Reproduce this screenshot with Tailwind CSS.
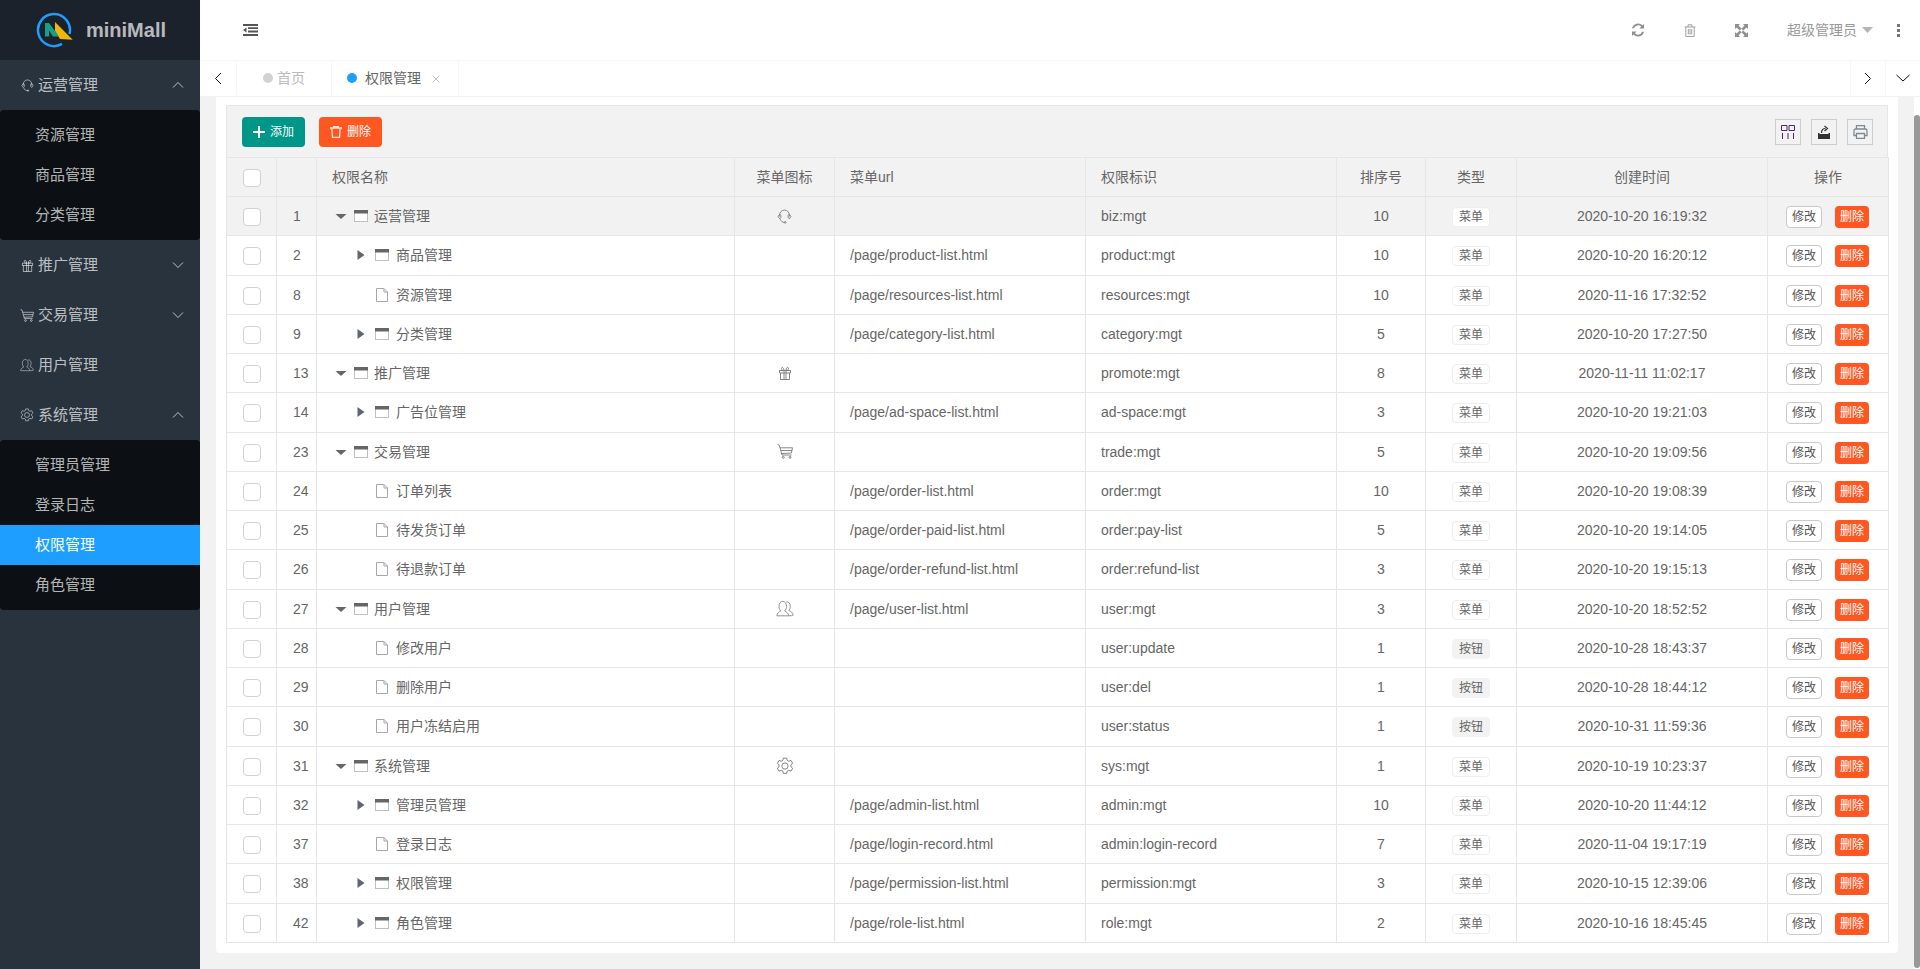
<!DOCTYPE html>
<html lang="zh-CN">
  <head>
    <meta charset="UTF-8" />
    <meta name="viewport" content="width=device-width, initial-scale=1.0" />
    <title>miniMall</title>
    <script src="https://cdn.jsdelivr.net/npm/@tailwindcss/browser@4"></script>
  </head>
  <body class="h-screen overflow-hidden flex bg-[#f2f2f2] text-[#666] text-sm [font-family:'Liberation_Sans','Noto_Sans_CJK_SC',sans-serif]">
    <!-- shared icons -->
    <svg class="hidden">
      <symbol id="i-headset" viewBox="0 0 14 14" fill="none" stroke="currentColor" stroke-width=".8"><path d="M2.500 7V5.500a4.500 4.500 0 0 1 9 0V7" /><path d="M2.500 4.800 1 7l1.500 2.200L3.600 8V6zM11.500 4.800 13 7l-1.500 2.200L10.400 8V6z" /><path d="M3 9.500c.6 2 2 3 4 3" /><circle cx="7.600" cy="12.500" r=".8" /></symbol>
      <symbol id="i-gift" viewBox="0 0 14 14" fill="none" stroke="currentColor" stroke-width=".9"><path d="M1.500 4.500h11V7h-11zM2.500 7v6.500h9V7M6 4.500v9M8 4.500v9" /><path d="M6 4.500C4 4.500 3 3 3.700 1.800S6 2.300 6 4.500M8 4.500c2 0 3-1.500 2.300-2.700S8 2.300 8 4.500" /></symbol>
      <symbol id="i-cart" viewBox="0 0 16 15" fill="none" stroke="currentColor" stroke-width=".9"><path d="M.5 .5 2.300 1.200 5 11h9.500" /><path d="M3.200 3.800H15.500L14.400 9 4.500 9.500M4 6.500h10.800" /><circle cx="6.300" cy="13.300" r="1" /><circle cx="13" cy="13.300" r="1" /></symbol>
      <symbol id="i-user" viewBox="0 0 16 14" fill="none" stroke="currentColor" stroke-width=".7"><path d="M.8 13.500c0-2.500 2-3.500 3.500-4.200C3.200 8.300 2.700 7 2.700 5c0-2.700 1.400-4.300 3.300-4.300S9.300 2.300 9.300 5c0 2-.5 3.300-1.600 4.300 1.500.7 3.500 1.700 3.500 4.200z" /><path d="M9.200 1.200c2-.4 3.500 1.200 3.500 3.800 0 1.800-.5 3-1.300 3.800 1.700.7 3.800 1.700 3.800 4.200-.1.300-2.500.5-4 .5" /></symbol>
      <symbol id="i-gear" viewBox="0 0 16 16" fill="none" stroke="currentColor" stroke-width=".8"><path d="M6.500 1h3l.4 2 1.500.8 1.900-.8 1.500 2.600-1.500 1.300v1.800l1.500 1.300-1.500 2.600-1.900-.8-1.500.8-.4 2h-3l-.4-2-1.500-.8-1.900.8L1.200 10l1.500-1.300V6.900L1.200 5.600l1.500-2.600 1.900.8 1.500-.8z" /><circle cx="8" cy="8" r="2.800" /></symbol>
      <symbol id="i-file" viewBox="0 0 12 14" fill="none" stroke="#a9a5ad" stroke-width="1"><path d="M.5 .5h7.500l3.500 3.500v9.500H.5z" /><path d="M8 .5V4h3.500" /></symbol>
      <symbol id="i-folder" viewBox="0 0 14 12"><rect x=".5" y=".5" width="13" height="11" fill="#fff" stroke="#c0c0c0" /><rect x="0" y="0" width="14" height="3.500" fill="#666" /></symbol>
      <symbol id="i-caret-down" viewBox="0 0 14 14" fill="#666"><path d="M1.500 5h11L7 10z" /></symbol>
      <symbol id="i-caret-right" viewBox="0 0 14 14" fill="#5f6670"><path d="M2.500 2l7 5-7 5z" /></symbol>
    </svg>

    <!-- sidebar -->
    <aside class="w-[200px] shrink-0 bg-[#28333e] text-[15px] text-white/70">
      <div class="h-[60px] bg-[#1c222b] flex items-center pl-[35px] gap-[13px]">
        <svg width="38" height="38" viewBox="0 0 38 38" class="shrink-0">
          <path d="M27 32.900A16 16 0 1 1 34.500 23" fill="none" stroke="#1e9fff" stroke-width="2.500" />
          <path d="M20 11 37.700 28.700 25 28 20 20z" fill="#f0b60e" />
          <path d="M10 12H14L23 24V25.500H18L14 19.500V25.500H10z" fill="#16a08c" />
        </svg>
        <span class="text-[20px] font-bold">miniMall</span>
      </div>

      <div class="h-[50px] flex items-center pl-[21px] pr-4">
        <svg class="w-[13px] h-[13px] mr-[4px]"><use href="#i-headset" /></svg>
        <span class="flex-1">运营管理</span>
        <svg width="12" height="8" viewBox="0 0 12 8" fill="none" stroke="currentColor"><path d="M1 6.500 6 1.500l5 5" /></svg>
      </div>
      <ul class="bg-[#0c0f13] py-[5px] rounded-sm">
        <li class="h-10 flex items-center pl-[35px]">资源管理</li>
        <li class="h-10 flex items-center pl-[35px]">商品管理</li>
        <li class="h-10 flex items-center pl-[35px]">分类管理</li>
      </ul>

      <div class="h-[50px] flex items-center pl-[21px] pr-4">
        <svg class="w-[13px] h-[13px] mr-[4px]"><use href="#i-gift" /></svg>
        <span class="flex-1">推广管理</span>
        <svg width="12" height="8" viewBox="0 0 12 8" fill="none" stroke="currentColor"><path d="M1 1.500l5 5 5-5" /></svg>
      </div>
      <div class="h-[50px] flex items-center pl-5 pr-4">
        <svg class="w-[14px] h-[13px] mr-[4px]"><use href="#i-cart" /></svg>
        <span class="flex-1">交易管理</span>
        <svg width="12" height="8" viewBox="0 0 12 8" fill="none" stroke="currentColor"><path d="M1 1.500l5 5 5-5" /></svg>
      </div>
      <div class="h-[50px] flex items-center pl-5 pr-4">
        <svg class="w-[14px] h-[14px] mr-[4px]"><use href="#i-user" /></svg>
        <span class="flex-1">用户管理</span>
      </div>
      <div class="h-[50px] flex items-center pl-5 pr-4">
        <svg class="w-[14px] h-[14px] mr-[4px]"><use href="#i-gear" /></svg>
        <span class="flex-1">系统管理</span>
        <svg width="12" height="8" viewBox="0 0 12 8" fill="none" stroke="currentColor"><path d="M1 6.500 6 1.500l5 5" /></svg>
      </div>
      <ul class="bg-[#0c0f13] py-[5px] rounded-sm">
        <li class="h-10 flex items-center pl-[35px]">管理员管理</li>
        <li class="h-10 flex items-center pl-[35px]">登录日志</li>
        <li class="h-10 flex items-center pl-[35px] bg-[#1e9fff] text-white">权限管理</li>
        <li class="h-10 flex items-center pl-[35px]">角色管理</li>
      </ul>
    </aside>

    <div class="flex-1 min-w-0 flex flex-col">
      <!-- top bar -->
      <header class="h-[61px] shrink-0 bg-white border-b border-[#f6f6f6] flex items-center text-[#999]">
        <svg class="ml-[43px]" width="15" height="12" viewBox="0 0 15 12" fill="#555"><path d="M0 0h15v2H0zM5 3.300h10v1.800H5zM5 6.600h10v1.800H5zM0 10h15v2H0zM3.500 3.500v5L0 6z" /></svg>
        <div class="flex-1"></div>
        <svg class="mr-[39px]" width="14" height="14" viewBox="0 0 14 14" fill="#8f8f8f"><path d="M13 1v4.600H8.400l1.800-1.800A4.200 4.200 0 0 0 3 5.300H1A6.200 6.200 0 0 1 11.500 2.400zM1 13V8.400h4.600L3.800 10.200A4.200 4.200 0 0 0 11 8.700h2A6.200 6.200 0 0 1 2.500 11.600z" /></svg>
        <svg class="mr-[39px]" width="12" height="13" viewBox="0 0 12 13" fill="none" stroke="#a0a0a0"><path d="M.5 3h11M4 3V.8h4V3M1.800 3v9.500h8.400V3M4.300 5v5.500M6 5v5.500M7.700 5v5.500" /></svg>
        <svg class="mr-[39px]" width="13" height="13" viewBox="0 0 13 13" fill="#8f8f8f"><path d="M0 0h5L3.500 1.500 6.500 4.800 4.800 6.500 1.500 3.500 0 5zM13 0v5l-1.500-1.500-3.300 3-1.700-1.700 3-3.300L8 0zM0 13V8l1.500 1.500 3.300-3 1.700 1.700-3 3.300L5 13zM13 13H8l1.500-1.500-3-3.300 1.700-1.700 3.300 3L13 8z" /></svg>
        <span class="mr-[5px]">超级管理员</span>
        <svg class="mr-[24px]" width="11" height="6" viewBox="0 0 11 6" fill="#b5b5b5"><path d="M0 0h11L5.500 6z" /></svg>
        <div class="flex flex-col gap-[2px] mr-[20px]">
          <span class="w-[3px] h-[3px] bg-[#777]"></span>
          <span class="w-[3px] h-[3px] bg-[#777]"></span>
          <span class="w-[3px] h-[3px] bg-[#777]"></span>
        </div>
      </header>

      <!-- tabs -->
      <nav class="h-[36px] shrink-0 bg-white border-b border-[#f2f2f2] pb-[1px] flex items-stretch">
        <div class="w-[37px] border-r border-[#f6f6f6] flex items-center justify-center pr-[1px]">
          <svg width="8" height="13" viewBox="0 0 8 13" fill="none" stroke="#111"><path d="M7 1 1.500 6.500 7 12" /></svg>
        </div>
        <div class="w-[95px] border-r border-[#f6f6f6] flex items-center pl-[26px] text-[#bbb]">
          <span class="w-[10px] h-[10px] rounded-full bg-[#d2d2d2] mr-1"></span>首页
        </div>
        <div class="w-[127px] border-r border-[#f6f6f6] flex items-center pl-[15px]">
          <span class="w-[10px] h-[10px] rounded-full bg-[#1e9fff] mr-2"></span>权限管理
          <svg class="ml-[11px] mt-[2px]" width="8" height="8" viewBox="0 0 8 8" stroke="#c2c2c2"><path d="M.5 .5l7 7M7.500 .5l-7 7" /></svg>
        </div>
        <div class="flex-1"></div>
        <div class="w-[35px] border-l border-[#f6f6f6] flex items-center justify-center">
          <svg width="8" height="13" viewBox="0 0 8 13" fill="none" stroke="#111"><path d="M1 1l5.500 5.500L1 12" /></svg>
        </div>
        <div class="w-[35px] border-l border-[#f6f6f6] flex items-center justify-center">
          <svg width="14" height="8" viewBox="0 0 14 8" fill="none" stroke="#111"><path d="M.5 1 7 7l6.500-6" /></svg>
        </div>
      </nav>

      <div class="flex-1 min-h-0 flex">
        <main class="flex-1 min-w-0 pl-4 pr-4">
          <div class="bg-white rounded-b-sm pt-2 px-[10px] pb-[10px]">
            <div class="h-[52px] bg-[#f2f2f2] border border-b-0 border-[#e6e6e6] flex items-center pl-[15px] pr-[14px] text-xs text-white">
              <button class="w-[63px] h-[30px] bg-[#009688] rounded-sm flex items-center justify-center gap-[5px] mr-[14px]">
                <svg width="12" height="12" viewBox="0 0 12 12" fill="#fff"><path d="M5 0h2v5h5v2H7v5H5V7H0V5h5z" /></svg>添加
              </button>
              <button class="w-[63px] h-[30px] bg-[#ff5722] rounded-sm flex items-center justify-center gap-[5px]">
                <svg width="12" height="12" viewBox="0 0 12 12" fill="none" stroke="#ffe3d6" stroke-width="1.300"><path d="M0 2h12M1.800 2.500l.7 8.800h7l.7-8.800M3 .6h6" /></svg>删除
              </button>
              <div class="flex-1"></div>
              <div class="w-[26px] h-[26px] border border-[#ccc] flex items-center justify-center mr-[10px]">
                <svg width="14" height="14" viewBox="0 0 14 14" fill="none" stroke="#4c2a5e"><path d="M.5 .5h5.500v5H.5zM8 .5h5.500v5H8zM1.500 8v6M7 8v6M12.500 8v6" /></svg>
              </div>
              <div class="w-[26px] h-[26px] border border-[#ccc] flex items-center justify-center mr-[10px]">
                <svg width="14" height="14" viewBox="0 0 14 14"><path d="M1 8h1.500v1h9V8H13v6H1zM2.500 9h9v1h-9z" fill="#333" /><path d="M4.500 8C4.500 5 6 3.500 8.500 3.500M7.500 1l3 2.500-3 2.500" fill="none" stroke="#333" stroke-width="1.200" /></svg>
              </div>
              <div class="w-[26px] h-[26px] border border-[#ccc] flex items-center justify-center">
                <svg width="15" height="14" viewBox="0 0 15 14" fill="none" stroke="#7d8a96" stroke-width="1.300"><path d="M3.500 4V.7h8V4M3.500 10.500H1V5.500C1 4.500 1.700 4 2.500 4h10c.8 0 1.500.5 1.500 1.500v5h-2.500M3.500 8.500h8v5h-8z" /></svg>
              </div>
            </div>

            <table class="table-fixed border-collapse w-[1662px]">
              <colgroup>
                <col class="w-[50px]" /><col class="w-[40px]" /><col class="w-[418px]" /><col class="w-[100px]" /><col class="w-[251px]" />
                <col class="w-[251px]" /><col class="w-[89px]" /><col class="w-[91px]" /><col class="w-[251px]" /><col class="w-[121px]" />
              </colgroup>
              <thead>
                <tr class="h-[39px] bg-[#f2f2f2]">
                  <th class="border border-[#e6e6e6] p-0 font-normal"><span class="block w-[18px] h-[18px] mx-auto mt-[2px] bg-white border border-[#d2d2d2] rounded-sm"></span></th>
                  <th class="border border-[#e6e6e6] p-0 font-normal"></th>
                  <th class="border border-[#e6e6e6] pl-[15px] font-normal text-left">权限名称</th>
                  <th class="border border-[#e6e6e6] p-0 font-normal">菜单图标</th>
                  <th class="border border-[#e6e6e6] pl-[15px] font-normal text-left">菜单url</th>
                  <th class="border border-[#e6e6e6] pl-[15px] font-normal text-left">权限标识</th>
                  <th class="border border-[#e6e6e6] p-0 font-normal">排序号</th>
                  <th class="border border-[#e6e6e6] p-0 font-normal">类型</th>
                  <th class="border border-[#e6e6e6] p-0 font-normal">创建时间</th>
                  <th class="border border-[#e6e6e6] p-0 font-normal">操作</th>
                </tr>
              </thead>
              <tbody id="rows"></tbody>
            </table>
          </div>
        </main>
        <!-- page scrollbar -->
        <div class="w-[6px] shrink-0 bg-white pt-[18px]">
          <div class="h-[853px] bg-[#999] rounded-[3px]"></div>
        </div>
      </div>
    </div>

    <script>
      // id, level, has children, menu icon, name, url, perm, sort, type, time
      const permissions = [
        [1, 0, true, "i-headset", "运营管理", "", "biz:mgt", 10, "菜单", "2020-10-20 16:19:32"],
        [2, 1, true, "", "商品管理", "/page/product-list.html", "product:mgt", 10, "菜单", "2020-10-20 16:20:12"],
        [8, 1, false, "", "资源管理", "/page/resources-list.html", "resources:mgt", 10, "菜单", "2020-11-16 17:32:52"],
        [9, 1, true, "", "分类管理", "/page/category-list.html", "category:mgt", 5, "菜单", "2020-10-20 17:27:50"],
        [13, 0, true, "i-gift", "推广管理", "", "promote:mgt", 8, "菜单", "2020-11-11 11:02:17"],
        [14, 1, true, "", "广告位管理", "/page/ad-space-list.html", "ad-space:mgt", 3, "菜单", "2020-10-20 19:21:03"],
        [23, 0, true, "i-cart", "交易管理", "", "trade:mgt", 5, "菜单", "2020-10-20 19:09:56"],
        [24, 1, false, "", "订单列表", "/page/order-list.html", "order:mgt", 10, "菜单", "2020-10-20 19:08:39"],
        [25, 1, false, "", "待发货订单", "/page/order-paid-list.html", "order:pay-list", 5, "菜单", "2020-10-20 19:14:05"],
        [26, 1, false, "", "待退款订单", "/page/order-refund-list.html", "order:refund-list", 3, "菜单", "2020-10-20 19:15:13"],
        [27, 0, true, "i-user", "用户管理", "/page/user-list.html", "user:mgt", 3, "菜单", "2020-10-20 18:52:52"],
        [28, 1, false, "", "修改用户", "", "user:update", 1, "按钮", "2020-10-28 18:43:37"],
        [29, 1, false, "", "删除用户", "", "user:del", 1, "按钮", "2020-10-28 18:44:12"],
        [30, 1, false, "", "用户冻结启用", "", "user:status", 1, "按钮", "2020-10-31 11:59:36"],
        [31, 0, true, "i-gear", "系统管理", "", "sys:mgt", 1, "菜单", "2020-10-19 10:23:37"],
        [32, 1, true, "", "管理员管理", "/page/admin-list.html", "admin:mgt", 10, "菜单", "2020-10-20 11:44:12"],
        [37, 1, false, "", "登录日志", "/page/login-record.html", "admin:login-record", 7, "菜单", "2020-11-04 19:17:19"],
        [38, 1, true, "", "权限管理", "/page/permission-list.html", "permission:mgt", 3, "菜单", "2020-10-15 12:39:06"],
        [42, 1, true, "", "角色管理", "/page/role-list.html", "role:mgt", 2, "菜单", "2020-10-16 18:45:45"],
      ];

      const td = "border border-[#e6e6e6] p-0";

      function nameCell(level, hasChildren, name) {
        const indent = level === 0 ? "pl-[17px]" : "pl-[38px]";
        const textGap = level === 0 ? "ml-[6px]" : "ml-[7px]";
        const caret = !hasChildren ? "" : level === 0 ? "i-caret-down" : "i-caret-right";
        const caretIcon = caret ? `<svg class="w-[14px] h-[14px]"><use href="#${caret}" /></svg>` : "";
        const nodeIcon = hasChildren
          ? `<svg class="w-[14px] h-3"><use href="#i-folder" /></svg>`
          : `<svg class="w-3 h-[14px] ml-[1px] mr-[1px]"><use href="#i-file" /></svg>`;
        return `<div class="flex items-center ${indent}"><span class="w-[14px] h-[14px] mr-[6px]">${caretIcon}</span>${nodeIcon}<span class="${textGap}">${name}</span></div>`;
      }

      function menuIcon(id) {
        if (!id) return "";
        const sizes = {
          "i-headset": "w-[15px] h-[15px]",
          "i-gift": "w-[14px] h-[14px]",
          "i-cart": "w-4 h-[15px]",
          "i-user": "w-[18px] h-[17px]",
          "i-gear": "w-[18px] h-[18px]",
        };
        return `<svg class="${sizes[id]} mx-auto text-[#777]"><use href="#${id}" /></svg>`;
      }

      function typeTag(type) {
        const look = type === "按钮" ? "bg-[#f2f2f2] border-[#f2f2f2]" : "bg-white border-[#eee]";
        return `<span class="inline-flex items-center justify-center w-[38px] h-5 mt-[2px] border rounded-sm text-xs ${look}">${type}</span>`;
      }

      document.getElementById("rows").innerHTML = permissions
        .map(([id, level, hasChildren, icon, name, url, perm, sort, type, time], i) => `
          <tr class="h-[39.26px] ${i === 0 ? "bg-[#f2f2f2]" : ""}">
            <td class="${td}"><span class="block w-[18px] h-[18px] mx-auto mt-[2px] bg-white border border-[#d2d2d2] rounded-sm"></span></td>
            <td class="${td} pl-[16px]">${id}</td>
            <td class="${td}">${nameCell(level, hasChildren, name)}</td>
            <td class="${td}">${menuIcon(icon)}</td>
            <td class="${td} pl-[15px]">${url}</td>
            <td class="${td} pl-[15px]">${perm}</td>
            <td class="${td} text-center">${sort}</td>
            <td class="${td} text-center">${typeTag(type)}</td>
            <td class="${td} text-center">${time}</td>
            <td class="${td}">
              <div class="flex items-center gap-[13px] pl-[18px] mt-[2px] text-xs">
                <button class="w-[36px] h-[22px] bg-white border border-[#c9c9c9] rounded-sm text-[#555]">修改</button>
                <button class="w-[34px] h-[22px] bg-[#ff5722] rounded-sm text-white">删除</button>
              </div>
            </td>
          </tr>`)
        .join("");
    </script>
  </body>
</html>
